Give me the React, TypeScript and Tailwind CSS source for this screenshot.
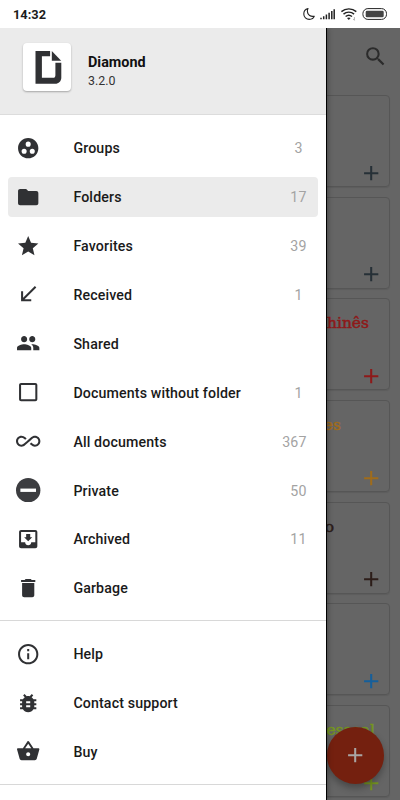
import type { ComponentType } from 'react';
import {
  MdAdd,
  MdAllInclusive,
  MdBugReport,
  MdCallReceived,
  MdCheckBoxOutlineBlank,
  MdDelete,
  MdFolder,
  MdGroupWork,
  MdInfoOutline,
  MdMoveToInbox,
  MdPeople,
  MdSearch,
  MdShoppingBasket,
  MdStar,
} from 'react-icons/md';

type IconType = ComponentType<{ className?: string }>;

type Item = {
  label: string;
  icon: IconType;
  count?: number;
  active?: boolean;
};

export default function App() {
  return (
    <div className="flex h-[800px] w-[400px] flex-col overflow-hidden bg-white font-['Roboto',sans-serif] text-[#151515]">
      <StatusBar />
      <div className="relative min-h-0 flex-1 overflow-hidden bg-[#656565]">
        <FolderList />
        <Drawer />
      </div>
    </div>
  );
}

function StatusBar() {
  return (
    <header className="flex h-7 shrink-0 items-center justify-between pl-[13px] pr-[12px]">
      <span className="pt-[2px] text-[12.8px] font-bold leading-none text-[#1c1c1c]">14:32</span>
      <svg width="86" height="14" viewBox="0 0 86 14" fill="none" className="text-[#222]">
        {/* Moon */}
        <path
          d="M6 1.5C3.3 2.2 1.8 4.4 1.8 6.9c0 3.2 2.5 5.5 5.5 5.5 2.5 0 4.4-1.3 5-3.2-3.6.8-6.7-1.2-6.9-4.6-.1-1.1.1-2.2.6-3.1z"
          stroke="currentColor"
          strokeWidth="1.1"
          strokeLinejoin="round"
        />
        {/* Signal */}
        <path
          d="M19 12.3v-1.6M21.7 12.3V9.3M24.4 12.3V7.6M27.1 12.3V5.8M29.8 12.3V4M32.2 12.3V2.2"
          stroke="currentColor"
          strokeWidth="1.5"
        />
        {/* Wi-Fi */}
        <path
          d="M39.4 4.6c4.2-3.6 10.7-3.6 14.9 0M41.5 7.1c3-2.6 7.6-2.6 10.6 0M43.6 9.5c1.8-1.5 4.6-1.5 6.4 0"
          stroke="currentColor"
          strokeWidth="1.4"
        />
        <path d="M45 11c1.1-.8 2.5-.8 3.6 0l-1.8 2z" fill="currentColor" />
        <path d="M52.4 10.1v3.2M51.1 12l1.3 1.3" stroke="#aaa" strokeWidth=".9" />
        {/* Battery */}
        <rect x="60.9" y="1.6" width="23.6" height="10.8" rx="5" stroke="currentColor" strokeWidth="1" />
        <rect x="63.7" y="3.7" width="18" height="6.6" rx="1.4" fill="#444" />
      </svg>
    </header>
  );
}

function FolderList() {
  return (
    <main>
      <div className="flex h-[67px] justify-end pr-[12px] pt-[16px]">
        <MdSearch className="size-[25px] text-[#2b2b2b]" />
      </div>
      <div className="flex flex-col gap-[9.7px] px-[10px]">
        {FOLDERS.map((folder, i) => (
          <section
            key={i}
            className="flex h-[92px] shrink-0 flex-col justify-between rounded-[4px] border border-[#565656] pt-[12px] shadow-[0_1px_1px_rgba(0,0,0,0.08)]"
          >
            <h2
              className={`flex h-6 justify-end whitespace-nowrap font-['DejaVu_Serif',serif] text-[15.5px] font-normal leading-6 [-webkit-text-stroke:0.5px_currentColor] ${folder.inset} ${folder.color}`}
            >
              {folder.title}
            </h2>
            <MdAdd className={`mb-px mr-[5.5px] size-[24.4px] self-end ${folder.color}`} />
          </section>
        ))}
      </div>
      <button
        aria-label="Add folder"
        className="absolute right-[16px] top-[698.5px] flex size-[57px] items-center justify-center rounded-full bg-[#74200f] text-[#a9a5a4] shadow-[0_4px_7px_rgba(0,0,0,0.3)]"
      >
        <MdAdd className="size-[24.4px]" />
      </button>
    </main>
  );
}

function Drawer() {
  return (
    <aside className="absolute inset-y-0 left-0 w-[326.5px] border-r border-black bg-white shadow-[1px_0_5px_rgba(0,0,0,0.3)]">
      <div className="flex h-[87px] border-b border-[#dcdcdc] bg-[#ebebeb] pl-[23px] pt-[15px]">
        <Logo />
        <div className="pl-[17px] pt-[11px]">
          <h1 className="text-[14.4px] font-bold leading-[17px] text-[#111]">Diamond</h1>
          <p className="mt-px text-[12.4px] leading-[17px] text-[#333]">3.2.0</p>
        </div>
      </div>
      <nav className="border-b border-[#d8d8d8] pb-[7.5px] pt-[8.5px]">
        {MAIN_ITEMS.map((item) => (
          <DrawerRow key={item.label} {...item} />
        ))}
      </nav>
      <nav className="border-b border-[#d8d8d8] pb-[8px] pt-[8.5px]">
        {MORE_ITEMS.map((item) => (
          <DrawerRow key={item.label} {...item} />
        ))}
      </nav>
    </aside>
  );
}

function DrawerRow({ label, icon: Icon, count, active }: Item) {
  return (
    <div className="flex h-[48.9px] items-center px-2">
      <div
        className={`flex h-[40.5px] w-full items-center rounded-[4px] pl-[8.4px] pr-[11px] pt-[2px] ${active ? 'bg-[#ebebeb]' : ''}`}
      >
        <Icon className="-mt-[2px] size-[24.4px] shrink-0 text-[#303134]" />
        <span className="flex-1 pl-[32.6px] text-[14.2px] font-medium tracking-[0.14px] text-[#1a1a1a]">{label}</span>
        <span className="min-w-[16px] text-center text-[14.2px] tracking-[0.1px] text-[#a3a3a3]">{count}</span>
      </div>
    </div>
  );
}

function Logo() {
  return (
    <div className="flex size-12 items-center justify-center rounded-[4px] bg-white shadow-[0_1px_2px_rgba(0,0,0,0.3)]">
      <svg width="48" height="48" viewBox="0 0 48 48" fill="#303134">
        <path d="M12.5 8h14.6v5.3h-8.2V34.8h11.1c1.6 0 2.4-1 2.4-2.6V19.7h5.9v15c0 3.4-2.7 6-6 6H12.5z" />
        <path d="M28.8 8l9.4 9.7h-9.4z" />
      </svg>
    </div>
  );
}

function PrivateIcon({ className }: { className?: string }) {
  return (
    <svg viewBox="0 0 24 24" className={className}>
      <circle cx="12" cy="12" r="12" fill="#3c3d40" />
      <path d="M4.3 10.4h15.4v3.3H4.3z" fill="#fff" />
    </svg>
  );
}

const MAIN_ITEMS: Item[] = [
  { label: 'Groups', icon: MdGroupWork, count: 3 },
  { label: 'Folders', icon: MdFolder, count: 17, active: true },
  { label: 'Favorites', icon: MdStar, count: 39 },
  { label: 'Received', icon: MdCallReceived, count: 1 },
  { label: 'Shared', icon: MdPeople },
  { label: 'Documents without folder', icon: MdCheckBoxOutlineBlank, count: 1 },
  { label: 'All documents', icon: MdAllInclusive, count: 367 },
  { label: 'Private', icon: PrivateIcon, count: 50 },
  { label: 'Archived', icon: MdMoveToInbox, count: 11 },
  { label: 'Garbage', icon: MdDelete },
];

const MORE_ITEMS: Item[] = [
  { label: 'Help', icon: MdInfoOutline },
  { label: 'Contact support', icon: MdBugReport },
  { label: 'Buy', icon: MdShoppingBasket },
];

const FOLDERS = [
  { title: '', color: 'text-[#263037]', inset: '' },
  { title: '', color: 'text-[#263037]', inset: '' },
  { title: 'hinês', color: 'text-[#8e1919]', inset: 'pr-[20px]' },
  { title: 'es', color: 'text-[#a06c1b]', inset: 'pr-[48px]' },
  { title: 'o', color: 'text-[#2c1d19]', inset: 'pr-[55px]' },
  { title: '', color: 'text-[#155f9b]', inset: '' },
  { title: 'essoal', color: 'text-[#759520]', inset: 'pr-[14px]' },
];
